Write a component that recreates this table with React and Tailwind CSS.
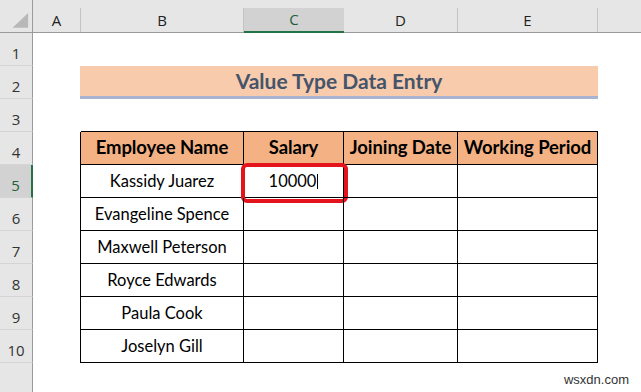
import React from "react";

const body = "font-[family-name:Lato,sans-serif]";
const ui = "font-[family-name:'Open_Sans',sans-serif]";

const colHeads = [
  { key: "A", w: "w-[48px]" },
  { key: "B", w: "w-[163px]" },
  { key: "C", w: "w-[100px]", active: true },
  { key: "D", w: "w-[114px]" },
  { key: "E", w: "w-[140px]" },
];

const people = [
  "Kassidy Juarez",
  "Evangeline Spence",
  "Maxwell Peterson",
  "Royce Edwards",
  "Paula Cook",
  "Joselyn Gill",
];

function RowHead({ n, active }) {
  return (
    <div
      className={`w-[33px] shrink-0 h-full flex justify-center items-center pt-[9px] border-b border-b-[#d4d4d4] text-[15px] ${ui} ${
        active
          ? "bg-[#d2d2d2] border-r-2 border-r-[#217346] text-[#1e5f3b]"
          : "bg-[#e6e6e6] border-r border-r-[#9b9b9b] text-[#333]"
      }`}
    >
      {n}
    </div>
  );
}

function PlainRow({ n, topOfTable }) {
  return (
    <div className="flex h-[33px]">
      <RowHead n={n} />
      <div className="w-[48px] shrink-0" />
      {topOfTable ? (
        <div className="w-[517px] shrink-0 border-b border-black" />
      ) : null}
      <div className="flex-1" />
    </div>
  );
}

function TableRow({ n, cells, header, active, children }) {
  const ws = ["w-[163px]", "w-[100px]", "w-[114px]", "w-[140px]"];
  return (
    <div className="flex h-[33px]">
      <RowHead n={n} active={active} />
      <div className="w-[48px] shrink-0 border-r border-black" />
      {ws.map((w, i) => (
        <div
          key={i}
          className={`${w} shrink-0 relative flex items-center justify-center border-r border-b border-black whitespace-nowrap ${body} ${
            header
              ? "bg-[#f4b183] font-bold text-[18.5px] tracking-[-0.1px] text-black"
              : "text-[16.5px] text-black"
          }`}
        >
          {cells[i]}
          {i === 1 && children}
        </div>
      ))}
      <div className="flex-1" />
    </div>
  );
}

export default function App() {
  return (
    <div className="relative w-[641px] h-[392px] overflow-hidden bg-white">
      {/* column headers */}
      <div className="flex h-[33px] bg-[#e6e6e6] border-b border-[#9b9b9b]">
        <div className="w-[33px] shrink-0 border-r border-[#9b9b9b] flex items-start">
          <svg width="33" height="32" viewBox="0 0 33 32">
            <polygon points="29,13 29,28 13,28" fill="#b8b8b8" />
          </svg>
        </div>
        {colHeads.map((c) => (
          <div
            key={c.key}
            className={`${c.w} shrink-0 mt-[8px] flex items-center justify-center text-[15px] ${ui} ${
              c.active
                ? "bg-[#d2d2d2] text-[#1e5f3b] border-b-2 border-[#217346] -mb-px"
                : "border-r border-[#c4c4c4] text-[#222]"
            }`}
          >
            {c.key}
          </div>
        ))}
        <div className="flex-1 mt-[8px]" />
      </div>

      <PlainRow n={1} />

      {/* title row */}
      <div className="flex h-[33px]">
        <RowHead n={2} />
        <div className="w-[47px] shrink-0" />
        <div
          className={`w-[518px] shrink-0 bg-[#f8cbad] border-b-[3px] border-[#a9b4d2] flex items-center justify-center font-bold text-[21px] text-[#44546a] ${body}`}
        >
          Value Type Data Entry
        </div>
        <div className="flex-1" />
      </div>

      <PlainRow n={3} topOfTable />

      <TableRow
        n={4}
        header
        cells={["Employee Name", "Salary", "Joining Date", "Working Period"]}
      />
      {people.map((p, i) => (
        <TableRow
          key={p}
          n={5 + i}
          active={i === 0}
          cells={[
            p,
            i === 0 ? (
              <span className="flex items-center">
                10000
                <span className="inline-block w-px h-[15px] bg-black ml-[1px]" />
              </span>
            ) : (
              ""
            ),
            "",
            "",
          ]}
        >
          {i === 0 && (
            <div className="absolute left-[-3px] top-[-2px] w-[107px] h-[40px] border-[4px] border-[#e3141c] rounded-[6px]" />
          )}
        </TableRow>
      ))}

      {/* row 11 */}
      <div className="flex h-[33px]">
        <div className="w-[33px] shrink-0 h-full bg-[#e6e6e6] border-r border-[#9b9b9b]" />
        <div className="flex-1" />
      </div>

      <div className="absolute right-[12px] bottom-[3px] text-[13px] text-[#333] font-[family-name:'Liberation_Sans',Arial,sans-serif]">
        wsxdn.com
      </div>
    </div>
  );
}
